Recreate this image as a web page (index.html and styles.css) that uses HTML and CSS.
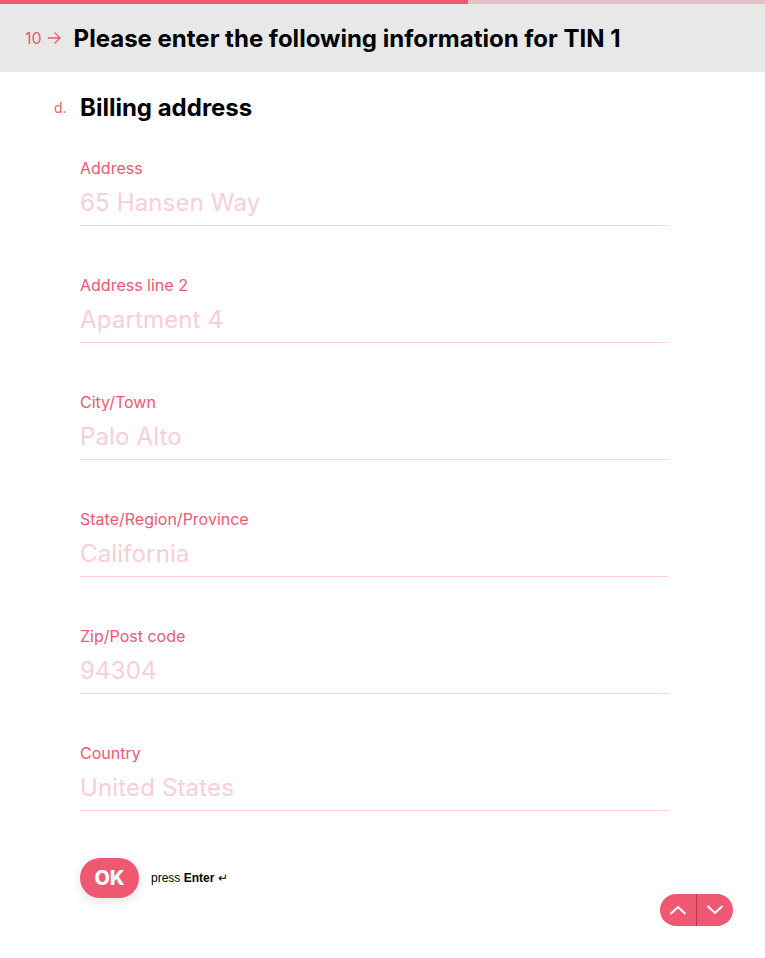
FILE: index.html
```html
<!DOCTYPE html>
<html lang="en">
<head>
    <meta charset="UTF-8">
    <meta name="viewport" content="width=device-width, initial-scale=1.0">
    <title>Billing address</title>
    <link rel="stylesheet" href="styles.css">
</head>
<body>
    <div class="progress"><div class="progress-fill"></div></div>

    <div class="header">
        <span class="q-num">10</span>
        <svg class="q-arrow" width="14" height="14" viewBox="0 0 14 14"><path d="M1 7h12M7.5 1.5L13 7l-5.5 5.5" fill="none" stroke="#ef5872" stroke-width="1.3"/></svg>
        <h1 class="title">Please enter the following information for TIN 1</h1>
    </div>

    <div class="section">
        <div class="sub-head">
            <span class="sub-letter">d.</span>
            <h2 class="sub-title">Billing address</h2>
        </div>

        <div class="fields">
            <div class="field">
                <label>Address</label>
                <div class="value">65 Hansen Way</div>
            </div>
            <div class="field">
                <label>Address line 2</label>
                <div class="value">Apartment 4</div>
            </div>
            <div class="field">
                <label>City/Town</label>
                <div class="value">Palo Alto</div>
            </div>
            <div class="field">
                <label>State/Region/Province</label>
                <div class="value">California</div>
            </div>
            <div class="field">
                <label>Zip/Post code</label>
                <div class="value">94304</div>
            </div>
            <div class="field">
                <label>Country</label>
                <div class="value">United States</div>
            </div>
        </div>

        <div class="actions">
            <button class="ok-btn">OK</button>
            <span class="hint">press <b>Enter</b> ↵</span>
        </div>
    </div>

    <div class="nav">
        <button class="nav-btn"><svg width="18" height="10" viewBox="0 0 18 10"><path d="M1.5 9L9 2l7.5 7" fill="none" stroke="#fff" stroke-width="2"/></svg></button>
        <button class="nav-btn"><svg width="18" height="10" viewBox="0 0 18 10"><path d="M1.5 1L9 8l7.5-7" fill="none" stroke="#fff" stroke-width="2"/></svg></button>
    </div>
</body>
</html>
```

FILE: styles.css
```css
body {
    margin: 0;
    font-family: Inter, "Noto Sans", sans-serif;
    background: #ffffff;
    width: 765px;
    height: 958px;
    position: relative;
    overflow: hidden;
}

.progress {
    height: 4px;
    background-color: #ecbcc5;
}

.progress-fill {
    width: 468px;
    height: 4px;
    background-color: #ef5872;
}

.header {
    display: flex;
    align-items: center;
    height: 68px;
    padding-left: 25px;
    background-color: #e8e8e8;
}

.q-num {
    font-size: 16px;
    color: #ef5872;
}

.q-arrow {
    margin-left: 5px;
    margin-right: 13px;
}

.title {
    margin: 0;
    font-size: 24px;
    font-weight: 700;
    color: #000;
}

.section {
    padding-left: 80px;
    width: 588px;
}

.sub-head {
    position: relative;
    margin-top: 22px;
}

.sub-letter {
    position: absolute;
    left: -26px;
    top: 5px;
    font-size: 14px;
    color: #ef5872;
}

.sub-title {
    margin: 0;
    font-size: 24px;
    font-weight: 700;
    line-height: 28px;
    color: #000;
}

.fields {
    margin-top: 36px;
}

.field {
    margin-bottom: 49px;
}

.field:last-child {
    margin-bottom: 47px;
}

.field label {
    display: block;
    font-size: 16px;
    line-height: 20px;
    color: #ef5872;
}

.field .value {
    margin-top: 9px;
    padding-bottom: 6px;
    font-size: 24px;
    line-height: 32px;
    letter-spacing: 0.15px;
    color: #f9ced8;
    border-bottom: 1px solid #fad1da;
}

.actions {
    display: flex;
    align-items: center;
}

.ok-btn {
    height: 40px;
    width: 59px;
    border: none;
    border-radius: 20px;
    background-color: #ef5872;
    color: #fff;
    font-family: Inter, "Noto Sans", sans-serif;
    font-size: 20px;
    font-weight: 800;
    box-shadow: 0 3px 12px rgba(0, 0, 0, 0.12);
    padding: 0;
}

.hint {
    margin-left: 12px;
    font-family: "Liberation Sans", Arial, sans-serif;
    font-size: 12px;
    color: #000;
}

.hint b {
    font-weight: 700;
    font-size: 12px;
}

.nav {
    position: absolute;
    left: 660px;
    top: 894px;
    display: flex;
    border-radius: 16px;
    overflow: hidden;
}

.nav-btn {
    width: 36px;
    height: 32px;
    border: none;
    padding: 0;
    background-color: #ef5872;
    display: flex;
    align-items: center;
    justify-content: center;
}

.nav-btn + .nav-btn {
    border-left: 1px solid #b8394f;
    width: 37px;
}
```
